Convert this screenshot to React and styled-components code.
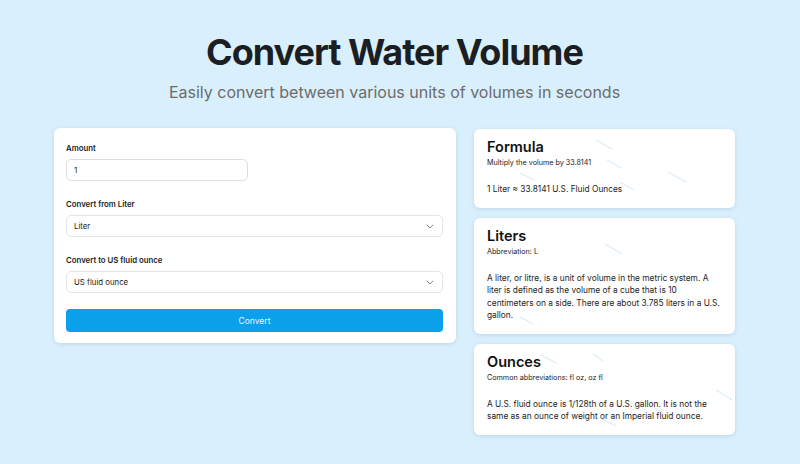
import React from "react";
import styled, { createGlobalStyle } from "styled-components";

const GlobalStyle = createGlobalStyle`
  html, body {
    margin: 0;
    padding: 0;
    background: #d9effc;
    font-family: Inter, "Noto Sans", sans-serif;
    color: #1b1d20;
  }
`;

const Page = styled.div`
  position: relative;
  width: 800px;
  height: 464px;
  overflow: hidden;
  background: #d9effc;
`;

// content is laid out over 789px (the original page had a scrollbar)
const Content = styled.div`
  width: 789px;
`;

const Header = styled.header`
  display: flex;
  flex-direction: column;
  align-items: center;
  padding-top: 29px;
`;

const Title = styled.h1`
  margin: 0;
  font-size: 36px;
  font-weight: 700;
  letter-spacing: -1px;
  line-height: 46px;
  color: #1b1e22;
`;

const Subtitle = styled.p`
  margin: 6px 0 0;
  font-size: 16px;
  color: #6c6c6c;
  line-height: 22px;
`;

const Columns = styled.main`
  display: grid;
  grid-template-columns: 402px 261px;
  gap: 18px;
  padding: 25px 0 0 54px;
  align-items: start;
`;

const Card = styled.section`
  background: #fff;
  border-radius: 6px;
  box-shadow: 0 1px 4px rgba(60, 110, 150, 0.18);
`;

const FormCard = styled(Card)`
  display: flex;
  flex-direction: column;
  padding: 14px 13px 11px 12px;
`;

const Field = styled.div`
  display: flex;
  flex-direction: column;
  margin-bottom: ${(p) => (p.$last ? "16px" : "17px")};
`;

const Label = styled.label`
  font-size: 7.8px;
  font-weight: 600;
  color: #1b1d20;
  line-height: 12px;
  margin-bottom: 5px;
`;

const Input = styled.input`
  box-sizing: border-box;
  width: ${(p) => p.$width || "100%"};
  height: 22px;
  border: 1px solid #dedede;
  border-radius: 5px;
  padding: 0 7px;
  font-family: inherit;
  font-size: 8px;
  color: #222;
  outline: none;
`;

const Select = styled.div`
  box-sizing: border-box;
  display: flex;
  align-items: center;
  justify-content: space-between;
  height: 22px;
  border: 1px solid #e4e4e4;
  border-radius: 5px;
  padding: 0 8px 0 7px;
  font-size: 7.8px;
  color: #222;
`;

const Button = styled.button`
  height: 23px;
  border: none;
  border-radius: 4px;
  background: #0ba0ea;
  color: #e9f6ff;
  font-family: inherit;
  font-size: 8.5px;
`;

const Side = styled.aside`
  display: flex;
  flex-direction: column;
  gap: 10px;
  padding-top: 1px;
`;

const InfoCard = styled(Card)`
  padding: 10px 12px 12px 13px;
`;

const CardTitle = styled.h2`
  margin: 0;
  font-size: 14.5px;
  font-weight: 600;
  line-height: 16px;
  color: #111;
`;

const CardSub = styled.p`
  margin: 2px 0 0;
  font-size: 7.2px;
  line-height: 11px;
  color: #222;
`;

const CardBody = styled.p`
  margin: 15px 0 0;
  font-size: 8.35px;
  line-height: 12.5px;
  color: #1d1d1d;
`;

const Rain = styled.svg`
  position: absolute;
  inset: 0;
  pointer-events: none;
`;

const Chevron = () => (
  <svg width="8" height="5" viewBox="0 0 8 5" fill="none">
    <path d="M1 1l3 3 3-3" stroke="#888" strokeWidth="1" strokeLinecap="round" strokeLinejoin="round" />
  </svg>
);

const streaks = [
  [596, 140, 612, 149],
  [668, 172, 686, 182],
  [607, 160, 621, 168],
  [520, 173, 534, 180],
  [620, 182, 634, 190],
  [605, 244, 622, 254],
  [486, 287, 500, 295],
  [520, 317, 533, 324],
  [541, 355, 556, 363],
  [593, 354, 603, 361],
  [716, 390, 732, 400],
  [600, 418, 616, 426],
  [650, 405, 664, 413],
];

const info = [
  {
    title: "Formula",
    sub: "Multiply the volume by 33.8141",
    body: "1 Liter ≈ 33.8141 U.S. Fluid Ounces",
  },
  {
    title: "Liters",
    sub: "Abbreviation: L",
    body:
      "A liter, or litre, is a unit of volume in the metric system. A liter is defined as the volume of a cube that is 10 centimeters on a side. There are about 3.785 liters in a U.S. gallon.",
  },
  {
    title: "Ounces",
    sub: "Common abbreviations: fl oz, oz fl",
    body:
      "A U.S. fluid ounce is 1/128th of a U.S. gallon. It is not the same as an ounce of weight or an Imperial fluid ounce.",
  },
];

export default function App() {
  return (
    <Page>
      <GlobalStyle />
      <Content>
        <Header>
          <Title>Convert Water Volume</Title>
          <Subtitle>Easily convert between various units of volumes in seconds</Subtitle>
        </Header>
        <Columns>
          <FormCard>
            <Field>
              <Label>Amount</Label>
              <Input $width="182px" defaultValue="1" />
            </Field>
            <Field>
              <Label>Convert from Liter</Label>
              <Select>
                <span>Liter</span>
                <Chevron />
              </Select>
            </Field>
            <Field $last>
              <Label>Convert to US fluid ounce</Label>
              <Select>
                <span>US fluid ounce</span>
                <Chevron />
              </Select>
            </Field>
            <Button>Convert</Button>
          </FormCard>
          <Side>
            {info.map((c) => (
              <InfoCard key={c.title}>
                <CardTitle>{c.title}</CardTitle>
                <CardSub>{c.sub}</CardSub>
                <CardBody>{c.body}</CardBody>
              </InfoCard>
            ))}
          </Side>
        </Columns>
      </Content>
      <Rain width="800" height="464">
        {streaks.map(([x1, y1, x2, y2], i) => (
          <line key={i} x1={x1} y1={y1} x2={x2} y2={y2} stroke="#a9d6f2" strokeWidth="0.8" opacity="0.7" />
        ))}
      </Rain>
    </Page>
  );
}
